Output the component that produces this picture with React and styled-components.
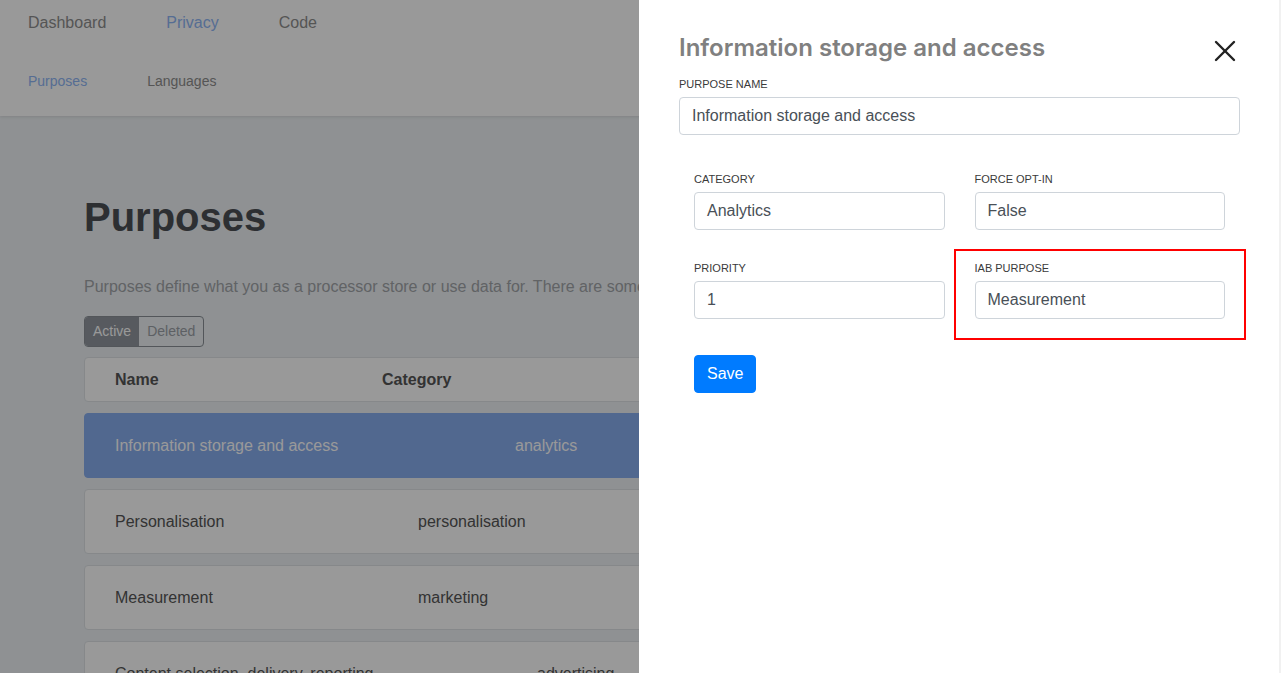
import React from 'react'
import styled, { createGlobalStyle } from 'styled-components'
import { X } from 'lucide-react'

const GlobalStyle = createGlobalStyle`
    html, body {
        margin: 0;
        padding: 0;
        height: 100%;
        overflow: hidden;
    }
    body {
        font-family: "Liberation Sans", Arial, sans-serif;
        font-size: 16px;
        color: #555;
        background: #eef2f5;
    }
`

const Page = styled.div`
    position: relative;
    height: 100vh;
    overflow: hidden;
    background: #eef2f5;
`

const Header = styled.header`
    background: #fff;
    box-shadow: 0 1px 3px rgba(0, 0, 0, 0.1);
`

const TopNav = styled.nav`
    display: flex;
    align-items: center;
    gap: 60px;
    height: 45px;
    padding: 0 28px;
    font-size: 16px;
`

const SubNav = styled.nav`
    display: flex;
    align-items: center;
    gap: 60px;
    height: 71px;
    padding: 0 28px;
    font-size: 14px;
`

const NavLink = styled.span`
    color: ${props => props.active ? '#8fb6f5' : '#8e8e8e'};
`

const Main = styled.main`
    padding: 77px 84px 0;
`

const Title = styled.h1`
    margin: 0;
    font-size: 40px;
    line-height: 48px;
    font-weight: 700;
    color: #4c4f54;
`

const Intro = styled.p`
    margin: 34px 0 17px;
    font-size: 16px;
    line-height: 24px;
    color: #a2a5a9;
    white-space: nowrap;
`

const ButtonGroup = styled.div`
    display: inline-flex;
    border: 1px solid #8a9097;
    border-radius: 4px;
    overflow: hidden;
    margin-bottom: 10px;
`

const ToggleButton = styled.span`
    padding: 0 8px;
    height: 29px;
    line-height: 29px;
    font-size: 14px;
    background: ${props => props.active ? '#92979f' : 'transparent'};
    color: ${props => props.active ? '#fff' : '#9ca1a7'};
`

const Card = styled.div`
    display: grid;
    grid-template-columns: ${props => props.nameCol}px 1fr;
    align-items: center;
    height: ${props => props.rowHeight}px;
    padding-left: 30px;
    margin-bottom: 11px;
    box-sizing: border-box;
    background: ${props => props.selected ? '#87adef' : '#fff'};
    border: 1px solid ${props => props.selected ? '#87adef' : '#dfe3e7'};
    border-radius: 4px;
    color: ${props => props.selected ? '#fff' : '#555'};
    font-size: 16px;
    font-weight: ${props => props.head ? 700 : 400};
    white-space: nowrap;
`

const Backdrop = styled.div`
    position: absolute;
    inset: 0;
    background: rgba(0, 0, 0, 0.4);
`

const Drawer = styled.aside`
    position: absolute;
    top: 0;
    right: 0;
    bottom: 0;
    width: 642px;
    box-sizing: border-box;
    background: #fff;
    border-right: 2px solid #f1f1f1;
    padding: 33px 39px 0 40px;
`

const DrawerHead = styled.div`
    display: flex;
    justify-content: space-between;
    align-items: flex-start;
    margin-bottom: 8px;
`

const DrawerTitle = styled.h2`
    margin: 0;
    font-family: Inter, "Liberation Sans", sans-serif;
    font-size: 24px;
    line-height: 30px;
    font-weight: 600;
    color: #808080;
`

const CloseButton = styled.button`
    display: flex;
    padding: 0;
    margin-right: -3px;
    border: 0;
    background: none;
    color: #222;
`

const Label = styled.label`
    display: block;
    font-size: 11px;
    line-height: 14px;
    text-transform: uppercase;
    color: #3a3a3a;
    margin-bottom: 6px;
`

const Input = styled.div`
    height: 38px;
    box-sizing: border-box;
    padding: 0 12px;
    display: flex;
    align-items: center;
    border: 1px solid #ced4da;
    border-radius: 4px;
    font-size: 16px;
    color: #495057;
`

const FormBody = styled.div`
    margin-top: 31px;
`

const FieldGrid = styled.div`
    display: grid;
    grid-template-columns: 1fr 1fr;
    row-gap: 10px;
`

const Field = styled.div`
    padding: 6px 15px 15px;
    outline: ${props => props.highlighted ? '2px solid #ff0000' : 'none'};
    outline-offset: 4px;
`

const Actions = styled.div`
    padding: 21px 15px 0;
`

const SaveButton = styled.button`
    height: 38px;
    padding: 0 12px;
    border: 1px solid #007bff;
    border-radius: 4px;
    background: #007bff;
    color: #fff;
    font-family: "Liberation Sans", Arial, sans-serif;
    font-size: 16px;
`

const rows = [
    { name: 'Information storage and access', category: 'analytics', nameCol: 400, selected: true },
    { name: 'Personalisation', category: 'personalisation', nameCol: 303 },
    { name: 'Measurement', category: 'marketing', nameCol: 303 },
    { name: 'Content selection, delivery, reporting', category: 'advertising', nameCol: 422 },
]

const fields = [
    { label: 'Category', value: 'Analytics' },
    { label: 'Force opt-in', value: 'False' },
    { label: 'Priority', value: '1' },
    { label: 'IAB Purpose', value: 'Measurement', highlighted: true },
]

const App = () => {
    return (
        <Page>
            <GlobalStyle />
            <Header>
                <TopNav>
                    <NavLink>Dashboard</NavLink>
                    <NavLink active>Privacy</NavLink>
                    <NavLink>Code</NavLink>
                </TopNav>
                <SubNav>
                    <NavLink active>Purposes</NavLink>
                    <NavLink>Languages</NavLink>
                </SubNav>
            </Header>
            <Main>
                <Title>Purposes</Title>
                <Intro>Purposes define what you as a processor store or use data for. There are some default purposes set up by the IAB framework.</Intro>
                <ButtonGroup>
                    <ToggleButton active>Active</ToggleButton>
                    <ToggleButton>Deleted</ToggleButton>
                </ButtonGroup>
                <Card head nameCol={267} rowHeight={45}>
                    <span>Name</span>
                    <span>Category</span>
                </Card>
                {rows.map(row => (
                    <Card key={row.name} nameCol={row.nameCol} rowHeight={65} selected={row.selected}>
                        <span>{row.name}</span>
                        <span>{row.category}</span>
                    </Card>
                ))}
            </Main>
            <Backdrop />
            <Drawer>
                <DrawerHead>
                    <DrawerTitle>Information storage and access</DrawerTitle>
                    <CloseButton><X size={36} strokeWidth={1.6} /></CloseButton>
                </DrawerHead>
                <Label>Purpose name</Label>
                <Input>Information storage and access</Input>
                <FormBody>
                    <FieldGrid>
                        {fields.map(field => (
                            <Field key={field.label} highlighted={field.highlighted}>
                                <Label>{field.label}</Label>
                                <Input>{field.value}</Input>
                            </Field>
                        ))}
                    </FieldGrid>
                    <Actions>
                        <SaveButton>Save</SaveButton>
                    </Actions>
                </FormBody>
            </Drawer>
        </Page>
    )
}

export default App
